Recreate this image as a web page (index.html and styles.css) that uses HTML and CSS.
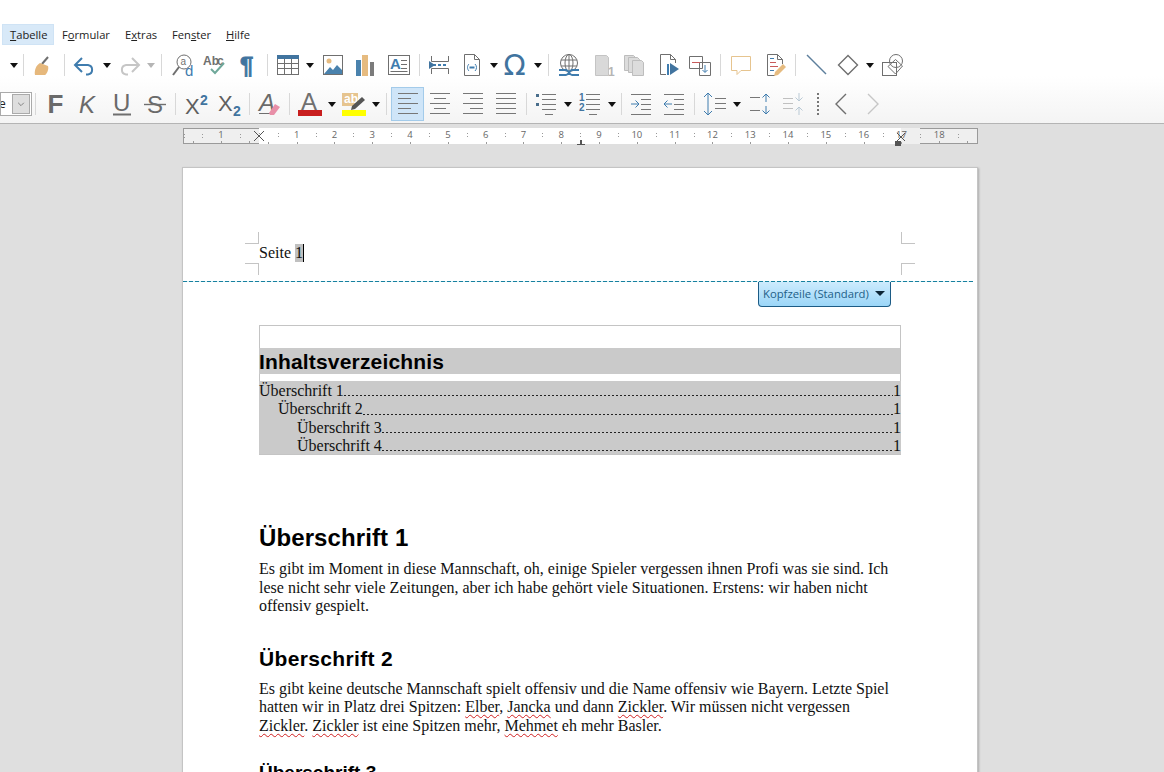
FILE: index.html
```html
<!DOCTYPE html>
<html lang="de">
<head>
<meta charset="utf-8">
<title>Writer</title>
<link rel="stylesheet" href="styles.css">
</head>
<body>
<div class="app">
  <div class="titlegap"></div>
  <nav class="menubar">
    <span class="menu active"><u>T</u>abelle</span>
    <span class="menu">F<u>o</u>rmular</span>
    <span class="menu">E<u>x</u>tras</span>
    <span class="menu">Fen<u>s</u>ter</span>
    <span class="menu"><u>H</u>ilfe</span>
  </nav>
  <div class="toolbars">
    <div class="toolbar row1">
      <span class="dd"></span><span class="sep n1"></span>
      <span class="ic"><svg viewBox="0 0 24 24"><path class="g" d="M16 4l-6 7" stroke-width="2"/><path fill="#e6b87c" d="M8 10l8 3c1 3-1 8-3 9H3c-1-4 1-10 5-12z"/></svg></span><span class="sep"></span>
      <span class="ic"><svg viewBox="0 0 24 24"><path class="b w2" d="M9 5l-7 7 7 7M2 12h13a4.800 4.800 0 0 1 0 9.500h-2"/></svg></span><span class="dd"></span>
      <span class="ic"><svg viewBox="0 0 24 24"><path class="lg w2" d="M15 5l7 7-7 7M22 12H9a4.800 4.800 0 0 0 0 9.500h2"/></svg></span><span class="dd off"></span><span class="sep"></span>
      <span class="ic m1"><svg viewBox="0 0 24 24"><circle class="g" cx="13" cy="9" r="7"/><path class="g w2" d="M8 14l-6 8"/><text class="t8 gf" x="9.500" y="12">a</text><text class="t13 bf" x="14" y="23">d</text></svg></span>
      <span class="ic"><svg viewBox="0 0 24 24"><text class="t11 gf" x="0" y="12">Ab</text><text class="t11 gf" x="14" y="12">c</text><path class="gr w2" d="M8 16l4 4 9-10"/></svg></span>
      <span class="ic"><svg viewBox="0 0 24 24"><text class="pil" x="5" y="21">¶</text></svg></span><span class="sep"></span>
      <span class="ic"><svg viewBox="0 0 24 24"><rect class="g" x="1.500" y="2.500" width="21" height="19"/><rect fill="#41749f" x="1" y="2" width="22" height="4"/><path class="g" d="M1.500 10.500h21M1.500 15.500h21M8.500 6v15M15.500 6v15"/></svg></span><span class="dd"></span>
      <span class="ic m1"><svg viewBox="0 0 24 24"><rect class="g" x="2.500" y="2.500" width="19" height="19"/><circle cx="8" cy="8" r="2.500" fill="#e6bb80"/><path fill="#4a82ad" d="M3 21l6-7 3 3 4-5 5 5v4z"/></svg></span>
      <span class="ic"><svg viewBox="0 0 24 24"><rect fill="#4a82ad" x="3" y="7" width="5" height="16"/><rect fill="#e6bb80" x="9" y="2" width="6" height="21"/><rect fill="#7b7b7b" x="17" y="9" width="4" height="14"/></svg></span>
      <span class="ic m2"><svg viewBox="0 0 24 24"><rect class="g" x="1.500" y="2.500" width="21" height="19"/><text class="tA bf" x="3" y="16">A</text><path class="g" d="M14 7.500h6M14 11.500h6M14 15.500h6M3.500 18.500h17"/></svg></span><span class="sep"></span>
      <span class="ic"><svg viewBox="0 0 24 24"><path class="g" d="M3.500 3v5.500h17V3M3.500 21v-5.500h17V21"/><path class="b w2" d="M5 12h15" stroke-dasharray="3 2"/><path fill="#41749f" d="M1 8l6 4-6 4z"/></svg></span>
      <span class="ic"><svg viewBox="0 0 24 24"><path class="g" d="M4.500 1.500h10l5 5v16h-15zM14.500 1.500v5h5"/><path class="b" d="M9 11c-2 2-2 5 0 7M15 11c2 2 2 5 0 7"/><path class="b w2" d="M9.500 14.500h5"/></svg></span><span class="dd"></span>
      <span class="ic"><svg viewBox="0 0 24 24"><text class="om" x="-0.500" y="22">Ω</text></svg></span><span class="dd"></span><span class="sep"></span>
      <span class="ic"><svg viewBox="0 0 24 24"><circle class="g" cx="12" cy="10" r="8.500"/><ellipse class="g" cx="12" cy="10" rx="4" ry="8.500"/><path class="g" d="M4 7h16M4 13h16M12 1v18"/><path class="b w2" d="M2 17h7M15 17h7M2 22h7M15 22h7"/><path class="b w2" d="M9 17c3 0 3 5 6 5M15 17c-3 0-3 5-6 5"/></svg></span>
      <span class="ic m2"><svg viewBox="0 0 24 24"><path fill="#d9d9d9" stroke="#c4c4c4" d="M4.500 2.500h11l2 2v18h-13z"/><text class="t11 lgf" x="17" y="23">1</text></svg></span>
      <span class="ic"><svg viewBox="0 0 24 24"><path fill="#dcdcdc" stroke="#bdbdbd" d="M1.500 2.500h9l2 2v13h-11z"/><path fill="#dcdcdc" stroke="#bdbdbd" d="M5.500 4.500h9l2 2v13h-11z"/><path fill="#dcdcdc" stroke="#bdbdbd" d="M9.500 7.500h9l2 2v13h-11z"/></svg></span>
      <span class="ic m1"><svg viewBox="0 0 24 24"><path class="g" d="M10 21.500H4.500v-20h10l5 5V10M14.500 1.500v5h5"/><path class="b w2" d="M12 11v11"/><path fill="#41749f" d="M14 10l9 6-9 6z"/></svg></span>
      <span class="ic"><svg viewBox="0 0 24 24"><path class="g" d="M1.500 3.500h13v12h-13zM11.500 9.500h11v13h-11z"/><path stroke="#c85a5a" fill="none" d="M4 9.500h8"/><path class="b" d="M17 12v7M14.500 17l2.500 2.500 2.500-2.500"/></svg></span><span class="sep"></span>
      <span class="ic"><svg viewBox="0 0 24 24"><path stroke="#e6c48f" fill="#fff" d="M2.500 3.500h19v14H12l-4 4v-4H2.500z"/></svg></span>
      <span class="ic m2"><svg viewBox="0 0 24 24"><path class="g" d="M12 22.500H4.500v-21h10l5 5V11M14.500 1.500v5h5"/><path stroke="#c85a5a" d="M7 9.500h6M7 13.500h8"/><path class="b" d="M7 5.500h4M7 17.500h4"/><path fill="#e6bb80" d="M20 11l3 3-8 8-4 1 1-4z"/></svg></span><span class="sep"></span>
      <span class="ic"><svg viewBox="0 0 24 24"><path stroke="#5d7f9c" stroke-width="1.400" d="M3 2l19 19"/></svg></span>
      <span class="ic"><svg viewBox="0 0 24 24"><path class="g w14" d="M12 2.500L21.500 12 12 21.500 2.500 12z"/></svg></span><span class="dd"></span>
      <span class="ic m1"><svg viewBox="0 0 24 24"><rect class="g" x="1.500" y="9.500" width="14" height="13"/><circle class="g" cx="15" cy="8" r="6.500" fill="#fff"/><path class="g" fill="#fff" d="M14.500 6.500l7 6.500-7 8-7.500-7.500z"/></svg></span>
    </div>
    <div class="toolbar row2">
      <span class="combo"><span class="combotext">e</span><span class="comboarrow"><svg viewBox="0 0 18 22"><path class="g" d="M5.500 9.500L9 13l3.500-3.500"/></svg></span></span><span class="sep n1"></span>
      <span class="ic"><svg viewBox="0 0 24 24"><text class="fmt fb" x="3.500" y="21">F</text></svg></span>
      <span class="ic"><svg viewBox="0 0 24 24"><text class="fmt fi" x="3" y="21">K</text></svg></span>
      <span class="ic m2"><svg viewBox="0 0 24 24"><text class="fmt fl" x="3" y="19">U</text><path class="g w2" d="M3 22.500h18"/></svg></span>
      <span class="ic m1"><svg viewBox="0 0 24 24"><text class="fmt fl" x="4" y="21">S</text><path class="g w14" d="M1 12.500h22"/></svg></span><span class="sep"></span>
      <span class="ic m1"><svg viewBox="0 0 24 24"><text class="fx" x="0" y="22">X</text><text class="fsup" x="15" y="13">2</text></svg></span>
      <span class="ic m1"><svg viewBox="0 0 24 24"><text class="fx" x="0" y="19">X</text><text class="fsup" x="15" y="24">2</text></svg></span><span class="sep n1"></span>
      <span class="ic"><svg viewBox="0 0 24 24"><text class="fmt fai" x="1" y="19">A</text><path class="g" d="M1 21.500h13"/><path fill="#e88fa8" d="M17 12l5 3-6 8h-4l-1-2z"/></svg></span><span class="sep n1"></span>
      <span class="ic"><svg viewBox="0 0 24 24"><text class="fa" x="3" y="18">A</text><rect fill="#c81e1e" x="0" y="18" width="24" height="6"/></svg></span><span class="dd"></span>
      <span class="ic"><svg viewBox="0 0 24 24"><rect fill="#e6c48f" x="0" y="1" width="16" height="13"/><text class="ab" x="2" y="11">ab</text><path fill="#555" d="M20 5l3 3-10 9-4 1 1-4z"/><rect fill="#ffff00" x="0" y="18" width="24" height="6"/></svg></span><span class="dd"></span><span class="sep"></span>
      <span class="ic big"><svg viewBox="0 0 24 24"><path class="ln" d="M2 1.500h20M2 6.500h13M2 11.500h20M2 16.500h13M2 21.500h20"/></svg></span>
      <span class="ic"><svg viewBox="0 0 24 24"><path class="ln" d="M2 1.500h20M6 6.500h12M2 11.500h20M6 16.500h12M2 21.500h20"/></svg></span>
      <span class="ic m1"><svg viewBox="0 0 24 24"><path class="ln" d="M2 1.500h20M9 6.500h13M2 11.500h20M9 16.500h13M2 21.500h20"/></svg></span>
      <span class="ic m1"><svg viewBox="0 0 24 24"><path class="ln" d="M2 1.500h20M2 6.500h20M2 11.500h20M2 16.500h20M2 21.500h20"/></svg></span><span class="sep"></span>
      <span class="ic n1"><svg viewBox="0 0 24 24"><rect fill="#4a6e8c" x="2" y="2" width="3" height="3"/><rect fill="#4a6e8c" x="2" y="11" width="3" height="3"/><path class="ln" d="M8 2.500h14M8 7.500h14M8 12.500h14M8 17.500h14M11 22.500h8"/></svg></span><span class="dd"></span>
      <span class="ic"><svg viewBox="0 0 24 24"><text class="nm" x="1" y="9">1</text><text class="nm" x="1" y="19">2</text><path class="ln" d="M8 2.500h14M8 7.500h14M8 12.500h14M8 17.500h14M11 22.500h8"/></svg></span><span class="dd"></span><span class="sep n1"></span>
      <span class="ic n1"><svg viewBox="0 0 24 24"><path class="ln" d="M2 2.500h20M12 7.500h10M12 12.500h10M12 17.500h10M2 22.500h20"/><path class="b" d="M2 12h8M6.500 8.500L10 12l-3.500 3.500"/></svg></span>
      <span class="ic m1"><svg viewBox="0 0 24 24"><path class="ln" d="M2 2.500h20M12 7.500h10M12 12.500h10M12 17.500h10M2 22.500h20"/><path class="b" d="M2 12h8M5.500 8.500L2 12l3.500 3.500"/></svg></span><span class="sep"></span>
      <span class="ic"><svg viewBox="0 0 24 24"><path class="b" d="M5 1v22M1 5l4-4 4 4M1 19l4 4 4-4"/><path class="ln" d="M12 6.500h11M12 11.500h11M12 16.500h11"/></svg></span><span class="dd"></span>
      <span class="ic m2"><svg viewBox="0 0 24 24"><path class="ln" d="M1 5.500h10M1 18.500h10"/><path class="b" d="M17 2v8M13.500 5.500L17 2l3.500 3.500M17 14v8M13.500 18.500L17 22l3.500-3.500"/></svg></span>
      <span class="ic m1"><svg viewBox="0 0 24 24"><path class="lln" d="M1 6.500h10M1 11.500h10M1 16.500h10"/><path class="lb" d="M17 1v8M13.500 5.500L17 9l3.500-3.500M17 23v-8M13.500 18.500L17 15l3.500 3.500"/></svg></span>
      <span class="dots"></span>
      <span class="ic m2"><svg viewBox="0 0 24 24"><path class="g w14" d="M16 2L6 12l10 10"/></svg></span>
      <span class="ic"><svg viewBox="0 0 24 24"><path class="lg w14" d="M6 2l10 10L6 22"/></svg></span>
    </div>
  </div>
  <main class="workspace">
    <div class="ruler">
      <span class="rc half"></span>
      <span class="rc side">1</span>
      <span class="rc side rc0"></span>
      <span class="rc rc0 white"></span>
      <span class="rc">1</span><span class="rc">2</span><span class="rc">3</span><span class="rc">4</span><span class="rc">5</span><span class="rc">6</span><span class="rc">7</span><span class="rc">8</span><span class="rc">9</span><span class="rc">10</span><span class="rc">11</span><span class="rc">12</span><span class="rc">13</span><span class="rc">14</span><span class="rc">15</span><span class="rc">16</span>
      <span class="rc split">17</span><span class="rc side">18</span><span class="rc side half2"></span>
      <svg class="tabx tx0" viewBox="0 0 12 12"><path stroke="#555" fill="none" d="M1 1l10 10M11 1L1 11"/></svg>
      <svg class="tabx tx17" viewBox="0 0 12 14"><path stroke="#555" fill="none" d="M2 1l8 8M10 1L2 9"/><path fill="#555" d="M0 9h6v5H0z"/></svg>
      <span class="tabstop"></span>
    </div>
    <article class="page">
      <div class="crop c1"></div><div class="crop c2"></div><div class="crop c3"></div><div class="crop c4"></div>
      <div class="hline"></div>
      <div class="hbtn"><span>Kopfzeile (Standard)</span><span class="dd dark"></span></div>
      <header class="pghead">Seite <span class="sel">1</span><span class="caret"></span></header>
      <section class="toc">
        <div class="tocblank"></div>
        <h2 class="toctitle">Inhaltsverzeichnis</h2>
        <div class="tocgap"></div>
        <div class="tocitems">
          <div class="tocline"><span>Überschrift 1</span><span class="leader"></span><span>1</span></div>
          <div class="tocline l2"><span>Überschrift 2</span><span class="leader"></span><span>1</span></div>
          <div class="tocline l3"><span>Überschrift 3</span><span class="leader"></span><span>1</span></div>
          <div class="tocline l3"><span>Überschrift 4</span><span class="leader"></span><span>1</span></div>
        </div>
      </section>
      <h1 class="h1">Überschrift 1</h1>
      <p class="para">Es gibt im Moment in diese Mannschaft, oh, einige Spieler vergessen ihnen Profi was sie sind. Ich<br>lese nicht sehr viele Zeitungen, aber ich habe gehört viele Situationen. Erstens: wir haben nicht<br>offensiv gespielt.</p>
      <h2 class="h2">Überschrift 2</h2>
      <p class="para p2">Es gibt keine deutsche Mannschaft spielt offensiv und die Name offensiv wie Bayern. Letzte Spiel<br>hatten wir in Platz drei Spitzen: <span class="sp">Elber</span>, <span class="sp">Jancka</span> und dann <span class="sp">Zickler</span>. Wir müssen nicht vergessen<br><span class="sp">Zickler</span>. <span class="sp">Zickler</span> ist eine Spitzen mehr, <span class="sp">Mehmet</span> eh mehr Basler.</p>
      <h3 class="h3">Überschrift 3</h3>
    </article>
  </main>
</div>
</body>
</html>
```
FILE: styles.css
```css
* { box-sizing: border-box; }
html, body { margin: 0; padding: 0; height: 772px; overflow: hidden; background: #fff; }
.app { width: 1164px; height: 772px; display: flex; flex-direction: column; overflow: hidden; font-family: "Open Sans", sans-serif; }
.titlegap { height: 24px; flex: none; }

.menubar { height: 21px; flex: none; display: flex; font-size: 11.2px; color: #222; padding-left: 2px; align-items: stretch; }
.menu { display: flex; align-items: center; white-space: pre; }
.menu u { text-underline-offset: 1px; }
.menu:nth-child(1) { width: 52px; padding-left: 7px; background: #d8e9f8; border: 1px solid #cfe3f5; }
.menu:nth-child(2) { width: 71px; padding-left: 8px; }
.menu:nth-child(3) { width: 47px; }
.menu:nth-child(4) { width: 54px; }

.toolbars { flex: none; height: 79px; background: linear-gradient(#fff 0, #fff 40%, #f4f4f4 100%); border-bottom: 1px solid #b4b4b4; }
.toolbar { display: flex; align-items: center; }
.row1 { height: 40px; padding-left: 8px; }
.row2 { height: 38px; }

.ic { width: 32px; height: 24px; flex: none; display: flex; justify-content: center; }
.ic svg { width: 24px; height: 24px; display: block; fill: none; overflow: visible; }
.m1 { margin-left: 1px; }
.m2 { margin-left: 2px; }
.n1 { margin-left: -1px; }
.big { height: 34px; width: 33px; align-items: center; background: #cfe5f8; border: 1px solid #a3cbea; }
.dd { width: 12px; height: 4px; flex: none; display: block; position: relative; }
.dd::after { content: ""; position: absolute; left: 2px; top: 0; border-left: 4px solid transparent; border-right: 4px solid transparent; border-top: 5px solid #111; }
.dd.off::after { border-top-color: #b5b5b5; }
.dd.dark::after { border-left-width: 5px; border-right-width: 5px; border-top-color: #0c2536; left: 0; }
.sep { width: 9px; height: 24px; flex: none; position: relative; }
.sep::after { content: ""; position: absolute; left: 4px; top: 1px; bottom: 1px; width: 1px; background: #d8d8d8; }
.dots { width: 12px; height: 22px; flex: none; margin-left: 2px; background: repeating-linear-gradient(#777 0 2px, transparent 2px 4px) center / 2px 100% no-repeat; }

.g { stroke: #6f6f6f; fill: none; }
.lg { stroke: #c6c6c6; fill: none; }
.b { stroke: #3f7cae; fill: none; }
.lb { stroke: #b9c9d5; fill: none; }
.gr { stroke: #6fa89a; fill: none; }
.w2 { stroke-width: 2; }
.w14 { stroke-width: 1.4; }
.ln { stroke: #777; fill: none; }
.lln { stroke: #c0c0c0; fill: none; }
text { font-family: "Liberation Sans", sans-serif; }
.gf { fill: #707070; }
.lgf { fill: #b5b5b5; }
.bf { fill: #3f7cae; }
.t8 { font-size: 10px; }
.t11 { font-size: 12px; font-weight: bold; }
.t13 { font-size: 15px; }
.tA { font-size: 15px; font-weight: bold; }
.pil { font-size: 24px; font-weight: bold; fill: #41749f; stroke: #41749f; stroke-width: .8; }
.om { font-size: 29px; fill: #41749f; font-family: "DejaVu Sans", sans-serif; }
.fmt { font-size: 24px; fill: #6a6a6a; }
.fb { font-weight: bold; font-size: 26px; }
.fi { font-style: italic; }
.fl { font-weight: normal; }
.fai { font-style: italic; font-size: 24px; }
.fx { font-size: 22px; fill: #5f5f5f; }
.fsup { font-size: 14px; font-weight: bold; fill: #41749f; }
.fa { font-size: 24px; fill: #707070; }
.ab { font-size: 12px; fill: #fff; font-weight: bold; }
.nm { font-size: 10px; font-weight: bold; fill: #41749f; }

.combo { width: 32px; height: 24px; flex: none; border: 1px solid #aaa; display: flex; justify-content: space-between; background: #fff; font-size: 12px; line-height: 22px; padding: 0 1px 0 0; color: #222; overflow: hidden; }
.combotext { margin-left: -2px; }
.comboarrow { width: 18px; height: 20px; margin-top: 1px; background: #dedede; border: 1px solid #aaa; display: block; }
.comboarrow svg { width: 16px; height: 18px; display: block; }

.workspace { flex: 1; background: #dfdfdf; overflow: hidden; padding-top: 4px; }
.ruler { margin-left: 183px; width: 794px; height: 16px; display: flex; position: relative; color: #666; font-size: 9.500px; line-height: 14px; background: #efefef; }
.rc { width: 37.800px; flex: none; text-align: center; height: 16px; position: relative; background: #fff; }
.rc::before { content: ""; position: absolute; left: 0; top: 5px; width: 1px; height: 5px; background: repeating-linear-gradient(#999 0 1px, transparent 1px 3px); }
.rc::after { content: ""; position: absolute; left: 50%; bottom: 0; width: 1px; height: 2px; background: #999; }
.half { width: 19px; }
.side { background: #efefef; border-top: 1px solid #9a9a9a; border-bottom: 1px solid #9a9a9a; line-height: 12px; }
.half, .half2 { background: #efefef; border-top: 1px solid #9a9a9a; border-bottom: 1px solid #9a9a9a; }
.half { border-left: 1px solid #9a9a9a; }
.half2 { width: 19.600px; border-right: 1px solid #9a9a9a; }
.rc0 { width: 19px; }
.white { background: #fff; }
.split { background: linear-gradient(90deg, #fff 50%, #efefef 50%); }
.tabx { position: absolute; left: 70px; top: 2px; width: 12px; height: 12px; }
.tx17 { left: 712px; top: 4px; width: 12px; height: 14px; }
.tabstop { position: absolute; left: 394px; top: 12px; width: 8px; height: 5px; background: linear-gradient(#555,#555) center top / 2px 4px no-repeat, linear-gradient(#555,#555) center bottom / 8px 1px no-repeat; }

.page { position: relative; margin: 23px 0 0 182px; width: 796px; height: 900px; background: #fff; border: 1px solid #c4c4c4; box-shadow: 1px 1px 2px #aaa; padding: 0 76px; font-family: "Liberation Serif", serif; color: #111; }
.crop { position: absolute; width: 14px; height: 12px; border: 0 solid #c4c4c4; }
.c1 { left: 62px; top: 64px; border-right-width: 1px; border-bottom-width: 1px; }
.c2 { left: 62px; top: 95px; border-right-width: 1px; border-top-width: 1px; }
.c3 { left: 718px; top: 64px; border-left-width: 1px; border-bottom-width: 1px; }
.c4 { left: 718px; top: 95px; border-left-width: 1px; border-top-width: 1px; }
.hline { position: absolute; left: 0; width: 790px; top: 113px; height: 1px; background: repeating-linear-gradient(90deg, #17809f 0 4px, #d5f0f6 4px 6px); }
.hbtn { position: absolute; left: 575px; top: 114px; width: 133px; height: 25px; display: flex; align-items: center; justify-content: space-between; padding: 0 4px 2px 4px; border: 1px solid #1c5b85; border-top: 0; border-radius: 0 0 4px 4px; background: linear-gradient(#cdebfd, #9bd6f8); font-family: "Open Sans", sans-serif; font-size: 11.300px; color: #1e5f88; }
.hbtn .dd { width: 11px; height: 5px; }

.pghead { padding-top: 76px; height: 157px; font-size: 16px; line-height: 18px; white-space: nowrap; }
.sel { background: #c0c0c0; display: inline-block; height: 18px; }
.caret { display: inline-block; width: 1px; height: 18px; background: #000; vertical-align: top; }

.toc { border: 1px solid #c4c4c4; height: 130px; width: 642px; }
.tocblank { height: 22px; }
.toctitle { margin: 0 0 0 -1px; height: 26px; background: #cacaca; font: bold 21px/27px "Liberation Sans", sans-serif; letter-spacing: .17px; color: #000; }
.tocgap { height: 7px; }
.tocitems { background: #cacaca; height: 73px; margin: 0 -1px; padding-top: 1px; font-size: 16px; line-height: 18.300px; }
.tocline { display: flex; white-space: nowrap; }
.leader { flex: 1; min-width: 0; background: repeating-linear-gradient(90deg, #222 0 2px, transparent 2px 4px) left bottom 4px / 100% 1px no-repeat; }
.l2 { padding-left: 19px; }
.l3 { padding-left: 38px; }

.h1 { margin: 69px 0 0; font: bold 24px/28px "Liberation Sans", sans-serif; letter-spacing: .1px; color: #000; }
.h2 { margin: 31px 0 0; font: bold 21px/24px "Liberation Sans", sans-serif; letter-spacing: .35px; color: #000; }
.h3 { margin: 27px 0 0; font: bold 19px/22px "Liberation Sans", sans-serif; color: #000; }
.para { margin: 8px 0 0; font-size: 16px; line-height: 18.500px; white-space: nowrap; }
.p2 { margin-top: 9px; }
.sp { text-decoration: underline wavy #d02020 1px; text-underline-offset: 2px; text-decoration-skip-ink: none; }
```
